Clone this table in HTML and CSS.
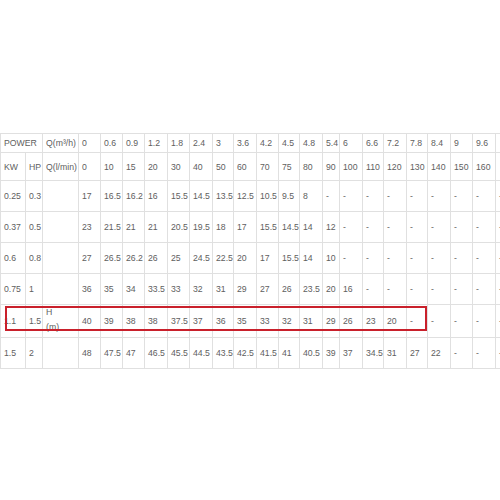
FILE: index.html
```html
<!DOCTYPE html>
<html>
<head>
<meta charset="utf-8">
<link rel="stylesheet" href="styles.css">
</head>
<body>
<div class="wrap">
  <table class="pump">
    <colgroup>
      <col style="width:25px"><col style="width:17px"><col style="width:36px">
      <col style="width:22px"><col style="width:22px"><col style="width:22px"><col style="width:23px">
      <col style="width:22px"><col style="width:23px"><col style="width:21px"><col style="width:23px">
      <col style="width:22px"><col style="width:21px"><col style="width:23px"><col style="width:17px">
      <col style="width:23px"><col style="width:21px"><col style="width:23px"><col style="width:21px">
      <col style="width:23px"><col style="width:22px"><col style="width:23px"><col style="width:30px">
    </colgroup>
    <tr class="h1">
      <td colspan="2">POWER</td><td>Q(m³/h)</td>
      <td>0</td><td>0.6</td><td>0.9</td><td>1.2</td><td>1.8</td><td>2.4</td><td>3</td><td>3.6</td><td>4.2</td><td>4.5</td><td>4.8</td><td>5.4</td><td>6</td><td>6.6</td><td>7.2</td><td>7.8</td><td>8.4</td><td>9</td><td>9.6</td><td></td>
    </tr>
    <tr class="h2">
      <td>KW</td><td>HP</td><td>Q(l/min)</td>
      <td>0</td><td>10</td><td>15</td><td>20</td><td>30</td><td>40</td><td>50</td><td>60</td><td>70</td><td>75</td><td>80</td><td>90</td><td>100</td><td>110</td><td>120</td><td>130</td><td>140</td><td>150</td><td>160</td><td></td>
    </tr>
    <tr class="d">
      <td>0.25</td><td>0.3</td><td></td>
      <td>17</td><td>16.5</td><td>16.2</td><td>16</td><td>15.5</td><td>14.5</td><td>13.5</td><td>12.5</td><td>10.5</td><td>9.5</td><td>8</td><td>-</td><td>-</td><td>-</td><td>-</td><td>-</td><td>-</td><td>-</td><td>-</td><td>-</td>
    </tr>
    <tr class="d">
      <td>0.37</td><td>0.5</td><td></td>
      <td>23</td><td>21.5</td><td>21</td><td>21</td><td>20.5</td><td>19.5</td><td>18</td><td>17</td><td>15.5</td><td>14.5</td><td>14</td><td>12</td><td>-</td><td>-</td><td>-</td><td>-</td><td>-</td><td>-</td><td>-</td><td>-</td>
    </tr>
    <tr class="d">
      <td>0.6</td><td>0.8</td><td></td>
      <td>27</td><td>26.5</td><td>26.2</td><td>26</td><td>25</td><td>24.5</td><td>22.5</td><td>20</td><td>17</td><td>15.5</td><td>14</td><td>10</td><td>-</td><td>-</td><td>-</td><td>-</td><td>-</td><td>-</td><td>-</td><td>-</td>
    </tr>
    <tr class="d">
      <td>0.75</td><td>1</td><td></td>
      <td>36</td><td>35</td><td>34</td><td>33.5</td><td>33</td><td>32</td><td>31</td><td>29</td><td>27</td><td>26</td><td>23.5</td><td>20</td><td>16</td><td>-</td><td>-</td><td>-</td><td>-</td><td>-</td><td>-</td><td>-</td>
    </tr>
    <tr class="d">
      <td>1.1</td><td>1.5</td><td class="hm">H<br>(m)</td>
      <td>40</td><td>39</td><td>38</td><td>38</td><td>37.5</td><td>37</td><td>36</td><td>35</td><td>33</td><td>32</td><td>31</td><td>29</td><td>26</td><td>23</td><td>20</td><td>-</td><td>-</td><td>-</td><td>-</td><td>-</td>
    </tr>
    <tr class="d">
      <td>1.5</td><td>2</td><td></td>
      <td>48</td><td>47.5</td><td>47</td><td>46.5</td><td>45.5</td><td>44.5</td><td>43.5</td><td>42.5</td><td>41.5</td><td>41</td><td>40.5</td><td>39</td><td>37</td><td>34.5</td><td>31</td><td>27</td><td>22</td><td>-</td><td>-</td><td>-</td>
    </tr>
  </table>
  <div class="highlight"></div>
</div>
</body>
</html>
```

FILE: styles.css
```css
html, body {
  margin: 0;
  padding: 0;
  background: #ffffff;
  overflow: hidden;
  width: 500px;
  height: 500px;
}

.wrap {
  position: relative;
  padding-top: 133px;
  width: 525px;
}

.pump {
  table-layout: fixed;
  border-collapse: collapse;
  width: 525px;
  font-family: "Liberation Sans", Arial, sans-serif;
  font-size: 8.7px;
  color: #606060;
}

.pump td {
  border: 1px solid #e0e0e0;
  padding: 0 0 0 3px;
  text-align: left;
  vertical-align: middle;
  white-space: nowrap;
  overflow: hidden;
  line-height: 12px;
}

.pump .hm {
  line-height: 15px;
  padding-bottom: 2px;
}

.h1 { height: 19px; }
.h2 { height: 28px; }
.d { height: 31px; }

.highlight {
  position: absolute;
  left: 5px;
  top: 306px;
  width: 418px;
  height: 21px;
  border: 2px solid #c9202b;
}
```
